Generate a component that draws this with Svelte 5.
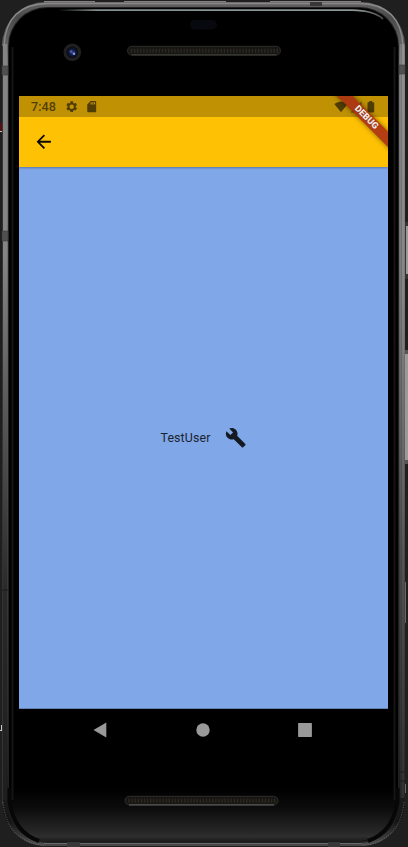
<script>
  const grille = Array.from({ length: 48 }, (_, i) => i * 3.1);
</script>

<div class="stage">
  <svg class="frame" width="408" height="847" viewBox="0 0 408 847" aria-hidden="true">
    <defs>
      <linearGradient id="metal" x1="0" y1="0" x2="0" y2="847" gradientUnits="userSpaceOnUse">
        <stop offset="0" stop-color="#6a6869" />
        <stop offset=".02" stop-color="#4a4a4a" />
        <stop offset=".08" stop-color="#777" />
        <stop offset=".3" stop-color="#707070" />
        <stop offset=".5" stop-color="#575757" />
        <stop offset=".66" stop-color="#3c3c3c" />
        <stop offset=".85" stop-color="#2b2b2b" />
        <stop offset=".97" stop-color="#151515" />
        <stop offset="1" stop-color="#555" />
      </linearGradient>
      <linearGradient id="metalLeft" x1="0" y1="0" x2="0" y2="847" gradientUnits="userSpaceOnUse">
        <stop offset="0" stop-color="#858384" />
        <stop offset=".3" stop-color="#858585" />
        <stop offset=".5" stop-color="#555" />
        <stop offset=".7" stop-color="#292929" />
        <stop offset="1" stop-color="#1c1c1c" />
      </linearGradient>
      <linearGradient id="metalRight" x1="0" y1="0" x2="0" y2="847" gradientUnits="userSpaceOnUse">
        <stop offset="0" stop-color="#949293" />
        <stop offset=".35" stop-color="#858585" />
        <stop offset=".6" stop-color="#5e5e5e" />
        <stop offset=".75" stop-color="#464646" />
        <stop offset="1" stop-color="#2a2a2a" />
      </linearGradient>
      <linearGradient id="chin" x1="0" y1="788" x2="0" y2="843" gradientUnits="userSpaceOnUse">
        <stop offset="0" stop-color="#000" />
        <stop offset=".35" stop-color="#0b0b0b" />
        <stop offset=".8" stop-color="#272727" />
        <stop offset=".88" stop-color="#2e2e2e" />
        <stop offset="1" stop-color="#171717" />
      </linearGradient>
      <linearGradient id="shine" x1="58" x2="383" y1="0" y2="0" gradientUnits="userSpaceOnUse">
        <stop offset="0" stop-color="#849090" stop-opacity="0" />
        <stop offset=".12" stop-color="#849090" />
        <stop offset=".92" stop-color="#8c9696" />
        <stop offset="1" stop-color="#aaa" stop-opacity=".4" />
      </linearGradient>
      <radialGradient id="lens">
        <stop offset="0" stop-color="#35438c" />
        <stop offset=".45" stop-color="#141c48" />
        <stop offset="1" stop-color="#08080d" />
      </radialGradient>
    </defs>
    <rect width="408" height="847" fill="#1f1f1f" />
    <path d="M0 123h2v8H0z" fill="#521015" />
    <path d="M0 131h2v1H0zM0 730h2v1H0zM1 725h1v5H1z" fill="#c9c9bd" />

    <rect x="404" y="222" width="4" height="57" fill="#333" />
    <rect x="406" y="226" width="2" height="48" fill="#999" />
    <rect x="404" y="350" width="4" height="114" fill="#555" />
    <rect x="405" y="354" width="3" height="106" fill="#999" />
    <path d="M405.5 582v41" stroke="#666" />
    <path d="M405.5 784v9" stroke="#666" />
    <path d="M44 2h51M124 2h102M270 2h91" stroke="#858183" stroke-width="2" />

    <rect x="2" y="2" width="403" height="844" rx="44" fill="url(#metal)" />
    <path d="M2.5 46V805" stroke="#333" />
    <path d="M5 44V800" stroke="url(#metalLeft)" stroke-width="4" />
    <path d="M402.5 44V798" stroke="url(#metalRight)" stroke-width="4" />
    <path d="M401.5 44V798" stroke="#000" stroke-opacity=".18" />
    <path d="M4 46Q6 4 48 3.500H359Q401 4 403 46" fill="none" stroke="#8a8889" stroke-width="1.300" />

    <rect x="8" y="7" width="391" height="836" rx="39" fill="#202020" />
    <rect x="9" y="8" width="389" height="833" rx="38" fill="#000" />
    <path d="M10 788H397V800Q394 838 356 842H46Q13 837 10 800Z" fill="url(#chin)" />
    <path d="M9.500 788V802Q14 832 39 841M397.500 788V802Q393 832 368 841" fill="none" stroke="#070707" stroke-width="4" />
    <path d="M12.5 47V800M394.5 47V800" stroke="#151515" stroke-width="2" />
    <path d="M58 10.2H352Q374 10.5 383 19" fill="none" stroke="url(#shine)" stroke-width="1.8" />
    <path d="M44 843.500H362" stroke="#696969" />
    <path d="M44 845H362" stroke="#474747" stroke-width="2" />
    <path d="M3 802Q7 842 44 845.500M404 802Q400 842 362 845.500" fill="none" stroke="#777" stroke-width=".8" stroke-dasharray="1 1.500" />

    <path d="M2 66h6v9H2zM399 65h6v9h-6zM2 231h6v10H2z" fill="#505050" stroke="#393939" stroke-width=".6" />
    <path d="M2 590h6M399 772h6M399 781h6" stroke="#1a1a1a" />
    <path d="M22 2" />
    <path d="M310 2h12v4h-12zM67 842h13v5H67zM328 842h12v5h-12z" fill="#393838" />

    <circle cx="72.3" cy="52.3" r="8.8" fill="#202020" />
    <circle cx="72.3" cy="52.3" r="5.8" fill="url(#lens)" />
    <circle cx="71" cy="51.5" r="1.3" fill="#4b5ca8" />
    <circle cx="74" cy="53.8" r="1.3" fill="#7d9ce0" />
    <rect x="190" y="20" width="27" height="9.5" rx="4.7" fill="#08090e" />

    {#each [{ x: 127.5, y: 46.3, edge: '#45453e' }, { x: 125, y: 796.3, edge: '#666' }] as s}
      <g transform="translate({s.x} {s.y})">
        <rect width="153" height="8.7" rx="4.3" fill="#171612" stroke="#2d2d2d" />
        <path d="M4 8.6H149" stroke={s.edge} />
        {#each grille as g}
          <path d="M{g + 4} 2.5v4" stroke="#2b2922" stroke-width="1.4" />
        {/each}
      </g>
    {/each}
  </svg>

  <main class="screen">
    <header class="top">
      <div class="status">
        <span class="time">7:48</span>
        <svg class="gear" width="13.4" height="13.4" viewBox="0 0 24 24"><path d="M19.14 12.94c.04-.3.06-.61.06-.94s-.02-.64-.07-.94l2.03-1.58c.18-.14.23-.41.12-.61l-1.92-3.32c-.12-.22-.37-.29-.59-.22l-2.39.96c-.5-.38-1.03-.7-1.62-.94l-.36-2.54c-.04-.24-.24-.41-.48-.41h-3.84c-.24 0-.43.17-.47.41l-.36 2.54c-.59.24-1.13.57-1.62.94l-2.39-.96c-.22-.08-.47 0-.59.22L2.74 8.87c-.12.21-.08.47.12.61l2.03 1.58c-.05.3-.09.63-.09.94s.02.64.07.94l-2.03 1.58c-.18.14-.23.41-.12.61l1.92 3.32c.12.22.37.29.59.22l2.39-.96c.5.38 1.03.7 1.62.94l.36 2.54c.05.24.24.41.48.41h3.84c.24 0 .44-.17.47-.41l.36-2.54c.59-.24 1.13-.56 1.62-.94l2.39.96c.22.08.47 0 .59-.22l1.92-3.32c.12-.22.07-.47-.12-.61zM12 16a4 4 0 1 1 0-8 4 4 0 0 1 0 8z" /></svg>
        <svg class="card" width="13.4" height="13.4" viewBox="0 0 24 24"><path d="M18 2h-8L4.020 8 4 20c0 1.100.9 2 2 2h12c1.100 0 2-.9 2-2V4c0-1.100-.9-2-2-2zm-6 6h-2V4h2v4zm3 0h-2V4h2v4zm3 0h-2V4h2v4z" /></svg>
        <span class="grow"></span>
        <svg class="wifi" width="14" height="12" viewBox="0 0 14 12"><path d="M7 11.200.3 3Q7-2 13.700 3Z" /></svg>
        <svg class="signal" width="12" height="12" viewBox="0 0 12 12"><path d="M.5 11.500 11.500.5v11z" /></svg>
        <svg class="battery" width="8" height="12" viewBox="0 0 8 12"><path d="M2.200 0h3v1.200h1.300q.7 0 .7.700v8.700q0 .8-.8.8H1.300q-.8 0-.8-.8V1.900q0-.7.7-.7h1z" /></svg>
      </div>
      <div class="appbar">
        <svg width="21.500" height="21.500" viewBox="0 0 24 24"><path d="M20 11H7.830l5.590-5.590L12 4l-8 8 8 8 1.410-1.410L7.830 13H20v-2z" /></svg>
      </div>
      <div class="debug"><b>DEBUG</b></div>
    </header>
    <section class="body">
      <span class="user">TestUser</span>
      <svg width="21.500" height="21.500" viewBox="0 0 24 24"><path d="M22.700 19l-9.100-9.100c.9-2.300.4-5-1.500-6.900-2-2-5-2.400-7.400-1.300L9 6 6 9 1.600 4.700C.4 7.100.9 10.100 2.900 12.100c1.900 1.900 4.600 2.400 6.900 1.500l9.100 9.100c.4.4 1 .4 1.400 0l2.300-2.300c.5-.4.5-1.100.1-1.400z" /></svg>
    </section>
  </main>

  <nav class="nav">
    <svg width="14" height="16" viewBox="0 0 14 16"><path d="M.5 8 13.300.6v14.800z" /></svg>
    <svg width="14" height="14" viewBox="0 0 14 14"><circle cx="7" cy="7" r="6.700" /></svg>
    <svg width="14" height="14" viewBox="0 0 14 14"><rect x=".1" y=".1" width="13.800" height="13.800" rx=".6" /></svg>
  </nav>
</div>

<style>
  :global(body) {
    margin: 0;
    background: #1f1f1f;
  }
  .stage {
    position: relative;
    box-sizing: border-box;
    width: 408px;
    height: 847px;
    padding: 96px 20px 0 19px;
    overflow: hidden;
    font-family: Roboto, "Liberation Sans", sans-serif;
  }
  svg {
    display: block;
    flex: none;
  }
  .frame {
    position: absolute;
    inset: 0;
  }
  .screen {
    position: relative;
    display: flex;
    flex-direction: column;
    width: 369px;
    height: 613px;
    background: #80a7e8;
    box-shadow: inset 0 -1px #6482b5;
  }
  .top {
    position: relative;
    z-index: 1;
    height: 71px;
    background: #ffc103;
    box-shadow: 0 1px 2px rgba(0, 0, 0, 0.3);
  }
  .status {
    display: flex;
    align-items: center;
    box-sizing: border-box;
    height: 21px;
    padding: 0 13px 0 12px;
    background: #bf9103;
    fill: #503d05;
  }
  .time {
    width: 34px;
    color: #544004;
    font-size: 12.6px;
    font-weight: 500;
    line-height: 21px;
    letter-spacing: 0;
  }
  .card {
    margin-left: 6.5px;
  }
  .grow {
    flex: 1;
  }
  .wifi {
    margin-right: 2px;
  }
  .signal {
    margin-right: 5px;
    opacity: 0.8;
  }
  .appbar {
    display: flex;
    align-items: center;
    height: 50px;
    padding-left: 14px;
    fill: #0c0a00;
  }
  .debug {
    position: absolute;
    top: 0;
    right: 0;
    width: 70px;
    height: 60px;
    overflow: hidden;
  }
  .debug b {
    position: absolute;
    left: 30px;
    top: 25.1px;
    width: 80px;
    height: 10.8px;
    background: rgba(173, 51, 18, 0.92);
    box-shadow: 0 0 5px rgba(0, 0, 0, 0.5);
    color: #f5e9e6;
    font-size: 9.15px;
    font-weight: 900;
    line-height: 11px;
    text-align: center;
    text-shadow: 0 0 1px #6b2812;
    transform: rotate(45deg);
    transform-origin: 40px -25.1px;
  }
  .body {
    flex: 1;
    display: flex;
    align-items: center;
    justify-content: center;
    gap: 14.5px;
    padding-bottom: 1px;
    fill: #151a22;
  }
  .user {
    color: #1b2431;
    font-size: 12.4px;
    letter-spacing: 0.13px;
  }
  .nav {
    position: relative;
    display: flex;
    align-items: center;
    justify-content: space-between;
    height: 42px;
    padding: 0 76px 0 74px;
    fill: #999;
  }
</style>
